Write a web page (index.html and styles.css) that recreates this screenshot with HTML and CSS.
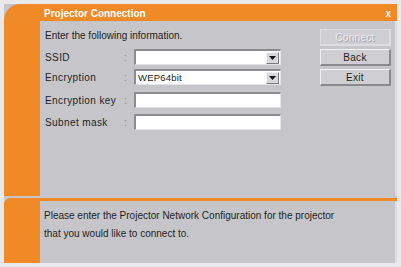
FILE: index.html
```html
<!DOCTYPE html>
<html>
<head>
<meta charset="utf-8">
<link rel="stylesheet" href="styles.css">
</head>
<body>
<div class="frame">
  <div class="top">
    <div class="titlebar">
      <span class="title">Projector Connection</span>
      <span class="close">x</span>
    </div>
    <div class="panel main">
      <div class="form">
        <div class="intro">Enter the following information.</div>
        <div class="row">
          <span class="label">SSID</span><span class="colon">:</span>
          <div class="field combo"><span class="value"></span><span class="drop"><svg width="7" height="4" viewBox="0 0 7 4"><path d="M0 0H7L3.5 4Z" fill="#111"/></svg></span></div>
        </div>
        <div class="row r2">
          <span class="label">Encryption</span><span class="colon">:</span>
          <div class="field combo"><span class="value">WEP64bit</span><span class="drop"><svg width="7" height="4" viewBox="0 0 7 4"><path d="M0 0H7L3.5 4Z" fill="#111"/></svg></span></div>
        </div>
        <div class="row r3">
          <span class="label">Encryption key</span><span class="colon">:</span>
          <div class="field"></div>
        </div>
        <div class="row r4">
          <span class="label">Subnet mask</span><span class="colon">:</span>
          <div class="field"></div>
        </div>
      </div>
      <div class="buttons">
        <div class="btn disabled">Connect</div>
        <div class="btn">Back</div>
        <div class="btn">Exit</div>
      </div>
    </div>
  </div>
  <div class="bottom">
    <div class="panel message">
      <p>Please enter the Projector Network Configuration for the projector</p>
      <p>that you would like to connect to.</p>
    </div>
  </div>
</div>
</body>
</html>
```

FILE: styles.css
```css
* { box-sizing: border-box; }
html, body { margin: 0; padding: 0; }
body {
  width: 401px;
  height: 267px;
  background: #e9e9eb;
  font-family: "Liberation Sans", Arial, sans-serif;
  font-size: 10px;
  color: #1e1e22;
  padding: 4px 4px 4px 4px;
  overflow: hidden;
}
.frame {
  width: 393px;
  height: 259px;
  background: #c6c6ca;
  display: flex;
  flex-direction: column;
}
.top {
  height: 192px;
  background: #f08a26;
  border-top-left-radius: 16px;
  display: flex;
  flex-direction: column;
  padding-left: 36px;
}
.titlebar {
  height: 17px;
  padding-top: 1px;
  display: flex;
  align-items: center;
  justify-content: space-between;
  color: #fff;
  font-weight: bold;
  padding-right: 6px;
}
.title { padding-left: 4px; }
.close { font-size: 10px; opacity: 0.9; }
.panel {
  flex: 1;
  background: #c6c6ca;
  border-right: 2px solid #dcdce0;
}
.main {
  display: flex;
  justify-content: space-between;
  padding: 8px 4px 0 5px;
}
.form { display: flex; flex-direction: column; letter-spacing: 0.4px; }
.intro { height: 13px; line-height: 13px; margin-bottom: 7px; letter-spacing: 0; }
.row {
  display: flex;
  align-items: center;
  height: 16px;
}
.r2 { margin-top: 4px; }
.r3 { margin-top: 7px; }
.r4 { margin-top: 6px; }
.label { width: 79px; }
.colon { width: 10px; color: #8a8a8e; }
.field {
  width: 147px;
  height: 16px;
  background: #fff;
  border-top: 2px solid #8c8c90;
  border-left: 2px solid #8c8c90;
  border-bottom: 1px solid #e4e4e8;
  border-right: 1px solid #e4e4e8;
  display: flex;
  align-items: center;
}
.value { flex: 1; padding-left: 2px; font-size: 9.5px; letter-spacing: 0.2px; }
.drop {
  width: 13px;
  height: 12px;
  margin-right: 1px;
  background: #d8d8dc;
  border-top: 1px solid #f4f4f6;
  border-left: 1px solid #f4f4f6;
  border-right: 1px solid #7c7c80;
  border-bottom: 1px solid #7c7c80;
  display: flex;
  align-items: center;
  justify-content: center;
}
.drop svg { display: block; }
.buttons {
  display: flex;
  flex-direction: column;
  gap: 3px;
  width: 71px;
}
.btn {
  height: 17px;
  background: #cfcfd3;
  border-top: 1px solid #f2f2f4;
  border-left: 1px solid #f2f2f4;
  border-right: 2px solid #8a8a8e;
  border-bottom: 2px solid #8a8a8e;
  display: flex;
  align-items: center;
  justify-content: center;
  letter-spacing: 0.3px;
}
.btn.disabled { color: #ececee; text-shadow: 1px 1px 0 #a4a4a8; border-color: #dedee2; }
.bottom {
  margin-top: 2px;
  flex: 1;
  background: #f08a26;
  border-top-left-radius: 6px;
  padding: 3px 0 0 36px;
  display: flex;
}
.message {
  padding: 6px 0 0 4px;
}
.message p { margin: 0; line-height: 18px; }
```
